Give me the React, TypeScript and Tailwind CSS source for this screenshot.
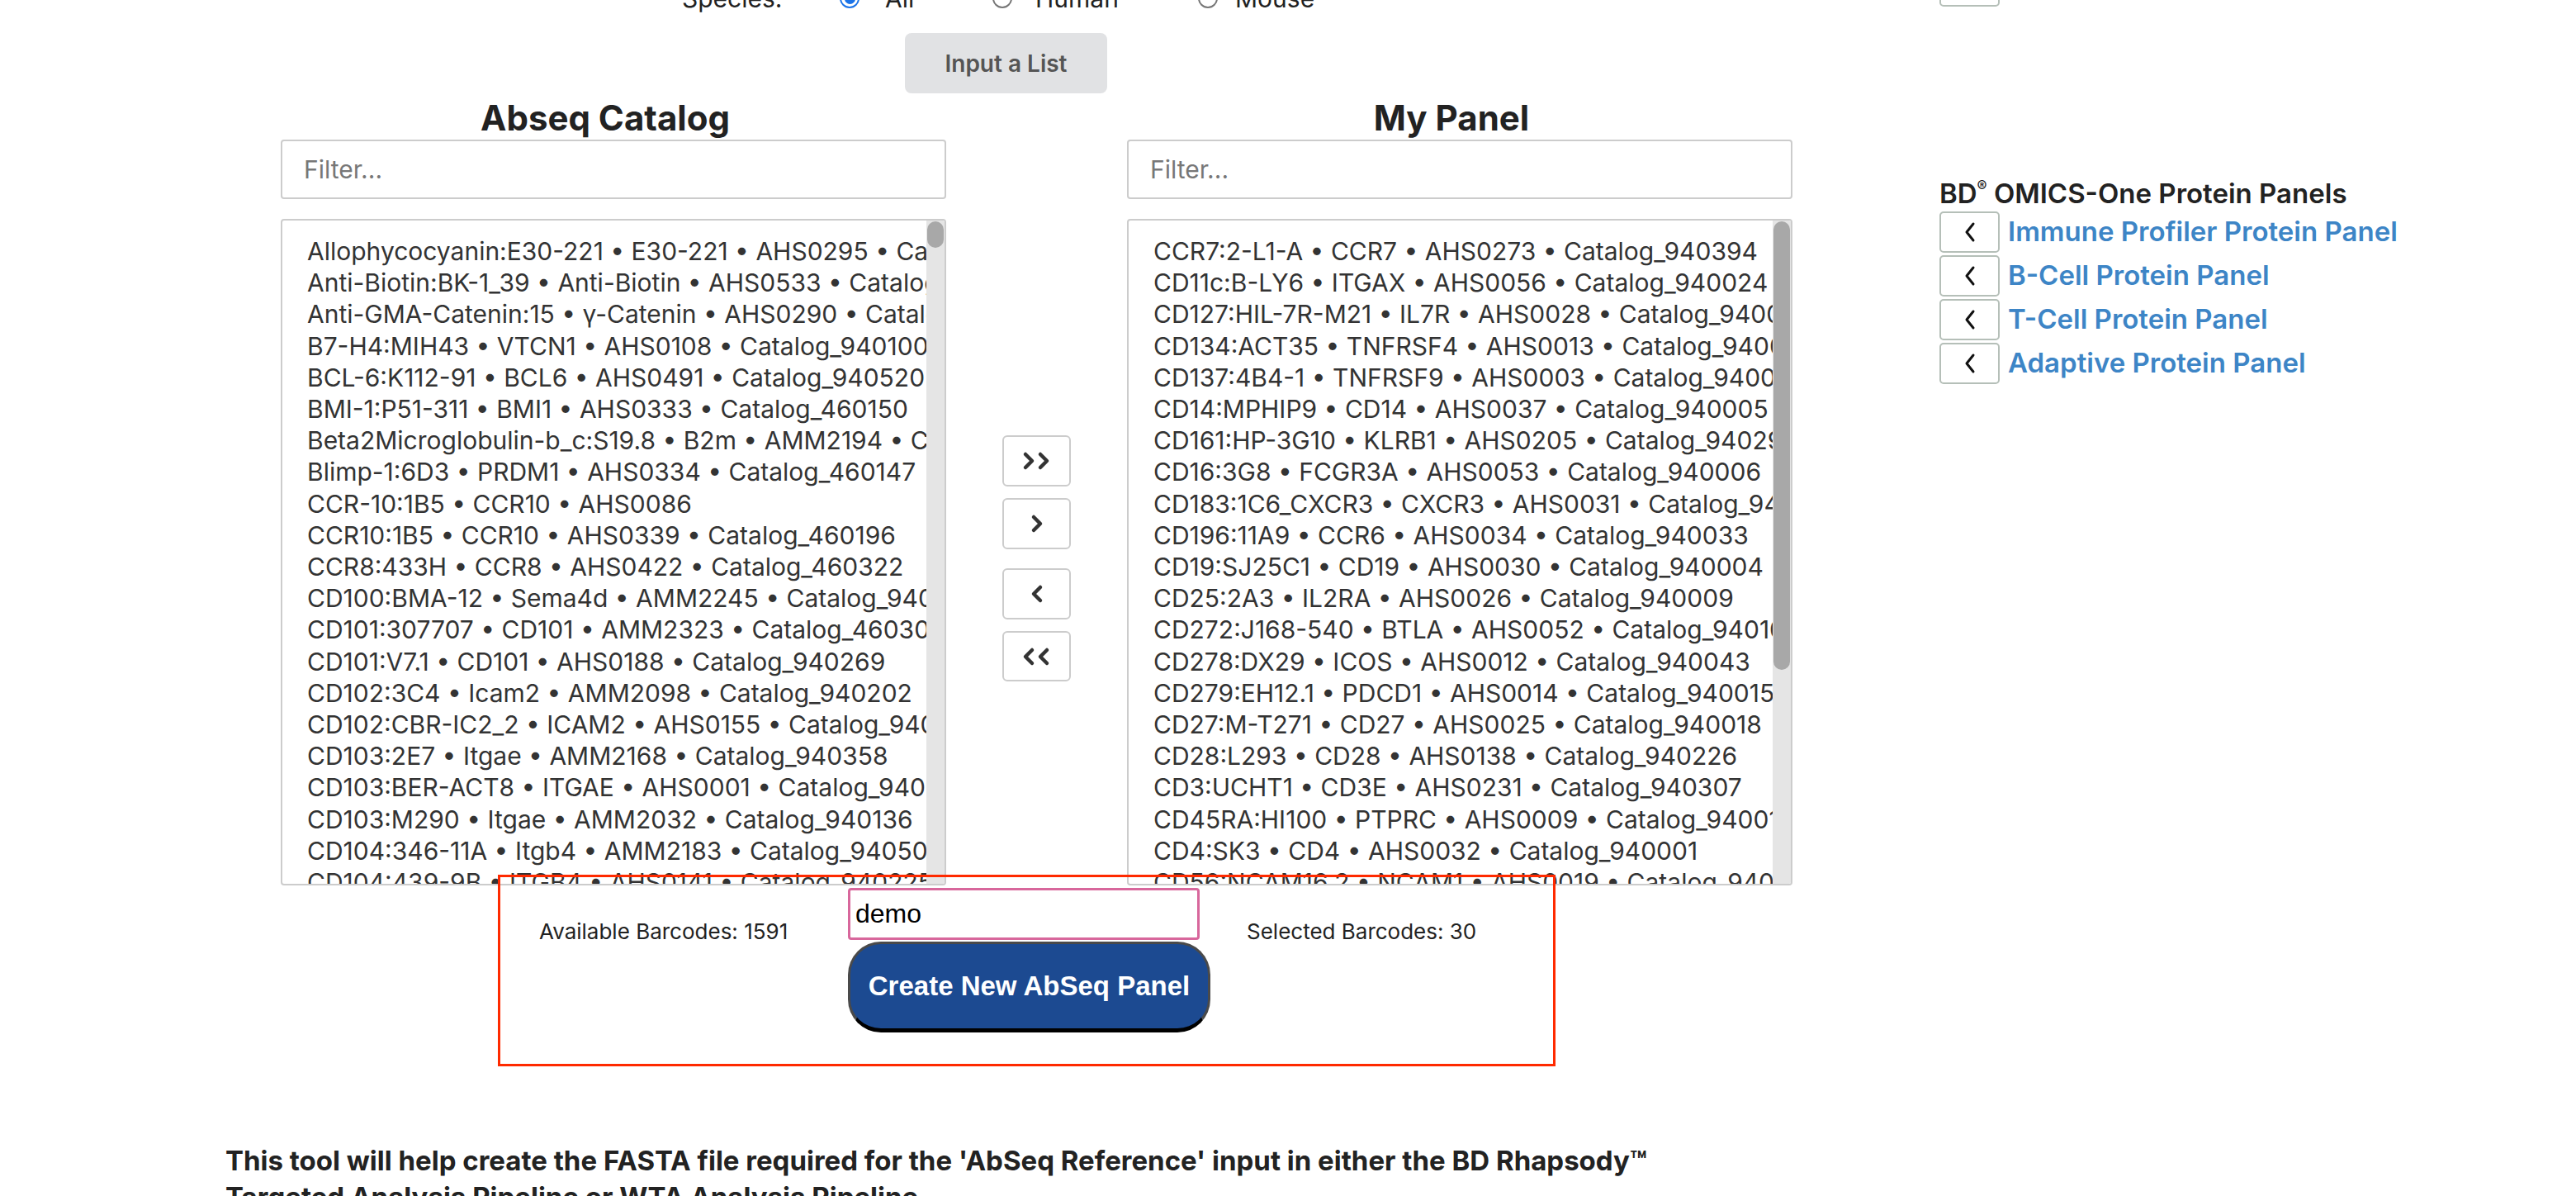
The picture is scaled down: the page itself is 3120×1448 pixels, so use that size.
import React from 'react'

// left catalog rows (clipped by the list box)
const catalog = [
  'Allophycocyanin:E30-221 • E30-221 • AHS0295 • Catalog_940403',
  'Anti-Biotin:BK-1_39 • Anti-Biotin • AHS0533 • Catalog_940497',
  'Anti-GMA-Catenin:15 • γ-Catenin • AHS0290 • Catalog_940374',
  'B7-H4:MIH43 • VTCN1 • AHS0108 • Catalog_940100',
  'BCL-6:K112-91 • BCL6 • AHS0491 • Catalog_940520',
  'BMI-1:P51-311 • BMI1 • AHS0333 • Catalog_460150',
  'Beta2Microglobulin-b_c:S19.8 • B2m • AMM2194 • Catalog_940351',
  'Blimp-1:6D3 • PRDM1 • AHS0334 • Catalog_460147',
  'CCR-10:1B5 • CCR10 • AHS0086',
  'CCR10:1B5 • CCR10 • AHS0339 • Catalog_460196',
  'CCR8:433H • CCR8 • AHS0422 • Catalog_460322',
  'CD100:BMA-12 • Sema4d • AMM2245 • Catalog_940411',
  'CD101:307707 • CD101 • AMM2323 • Catalog_460303',
  'CD101:V7.1 • CD101 • AHS0188 • Catalog_940269',
  'CD102:3C4 • Icam2 • AMM2098 • Catalog_940202',
  'CD102:CBR-IC2_2 • ICAM2 • AHS0155 • Catalog_940209',
  'CD103:2E7 • Itgae • AMM2168 • Catalog_940358',
  'CD103:BER-ACT8 • ITGAE • AHS0001 • Catalog_940015',
  'CD103:M290 • Itgae • AMM2032 • Catalog_940136',
  'CD104:346-11A • Itgb4 • AMM2183 • Catalog_940505',
  'CD104:439-9B • ITGB4 • AHS0141 • Catalog_940225',
]

const myPanel = [
  'CCR7:2-L1-A • CCR7 • AHS0273 • Catalog_940394',
  'CD11c:B-LY6 • ITGAX • AHS0056 • Catalog_940024',
  'CD127:HIL-7R-M21 • IL7R • AHS0028 • Catalog_940012',
  'CD134:ACT35 • TNFRSF4 • AHS0013 • Catalog_940060',
  'CD137:4B4-1 • TNFRSF9 • AHS0003 • Catalog_940055',
  'CD14:MPHIP9 • CD14 • AHS0037 • Catalog_940005',
  'CD161:HP-3G10 • KLRB1 • AHS0205 • Catalog_940294',
  'CD16:3G8 • FCGR3A • AHS0053 • Catalog_940006',
  'CD183:1C6_CXCR3 • CXCR3 • AHS0031 • Catalog_940030',
  'CD196:11A9 • CCR6 • AHS0034 • Catalog_940033',
  'CD19:SJ25C1 • CD19 • AHS0030 • Catalog_940004',
  'CD25:2A3 • IL2RA • AHS0026 • Catalog_940009',
  'CD272:J168-540 • BTLA • AHS0052 • Catalog_940107',
  'CD278:DX29 • ICOS • AHS0012 • Catalog_940043',
  'CD279:EH12.1 • PDCD1 • AHS0014 • Catalog_940015',
  'CD27:M-T271 • CD27 • AHS0025 • Catalog_940018',
  'CD28:L293 • CD28 • AHS0138 • Catalog_940226',
  'CD3:UCHT1 • CD3E • AHS0231 • Catalog_940307',
  'CD45RA:HI100 • PTPRC • AHS0009 • Catalog_940011',
  'CD4:SK3 • CD4 • AHS0032 • Catalog_940001',
  'CD56:NCAM16.2 • NCAM1 • AHS0019 • Catalog_940007',
]

const presets = [
  'Immune Profiler Protein Panel',
  'B-Cell Protein Panel',
  'T-Cell Protein Panel',
  'Adaptive Protein Panel',
]

const Radio = ({ checked }: { checked?: boolean }) =>
  checked ? (
    <span className="block w-[24px] h-[24px] rounded-full border-[2px] border-[#1a73e8] flex items-center justify-center">
      <span className="block w-[13px] h-[13px] rounded-full bg-[#1a73e8]" />
    </span>
  ) : (
    <span className="block w-[24px] h-[24px] rounded-full border-[2px] border-[#767676] bg-white" />
  )

// thick chevrons used on the transfer buttons
const Chevrons = ({ dir, double }: { dir: 'left' | 'right'; double?: boolean }) => {
  const one = dir === 'right' ? 'M4 3 L12 11 L4 19' : 'M12 3 L4 11 L12 19'
  return (
    <svg width={double ? 36 : 16} height="24" viewBox={double ? '0 0 36 22' : '0 0 16 22'} fill="none">
      <path d={one} stroke="#333" strokeWidth="4.5" strokeLinecap="round" strokeLinejoin="round" />
      {double && (
        <path
          d={dir === 'right' ? 'M22 3 L30 11 L22 19' : 'M30 3 L22 11 L30 19'}
          stroke="#333"
          strokeWidth="4.5"
          strokeLinecap="round"
          strokeLinejoin="round"
        />
      )}
    </svg>
  )
}

const ListBox = ({ items, thumb }: { items: string[]; thumb: string }) => (
  <div className="h-[807px] border-[2px] border-[#cccccc] rounded-[4px] flex overflow-hidden bg-white">
    <div className="flex-1 min-w-0 overflow-hidden pt-[18px] pl-[30px]">
      {items.map((t) => (
        <div key={t} className="whitespace-nowrap text-[30px] leading-[38.2px] text-[#333]">
          {t}
        </div>
      ))}
    </div>
    <div className="w-[22px] bg-[#e5e5e5] flex flex-col px-[1px] pt-[1px]">
      <div className={`${thumb} rounded-full bg-[#a8a8a8]`} />
    </div>
  </div>
)

const Column = ({ title, items, thumb }: { title: string; items: string[]; thumb: string }) => (
  <div className="w-[806px] flex flex-col">
    <h2 className="h-[48px] pr-[20px] text-center text-[42px] leading-[48px] font-bold text-[#222]">{title}</h2>
    <input
      className="mt-[2px] h-[72px] border-[2px] border-[#cccccc] rounded-[4px] px-[26px] text-[30px] text-[#333] placeholder:text-[#777] outline-none"
      placeholder="Filter..."
    />
    <div className="mt-[24px]">
      <ListBox items={items} thumb={thumb} />
    </div>
  </div>
)

export default function App() {
  return (
    <div className="w-[3120px] h-[1448px] overflow-hidden bg-white font-['Inter',sans-serif] text-[#222]">
      {/* species row, mostly scrolled off the top */}
      <div className="-mt-[42px] h-[50px] flex items-start">
        <div className="mt-[22px] ml-[826px] flex items-center h-[36px] text-[30px] text-[#222]">
          <span className="w-[191px]">Species:</span>
          <Radio checked />
          <span className="ml-[31px] w-[130px]">All</span>
          <Radio />
          <span className="ml-[28px] w-[197px]">Human</span>
          <Radio />
          <span className="ml-[21px]">Mouse</span>
        </div>
        <div className="ml-auto mr-[698px] w-[73px] h-[50px] border-[2px] border-[#b5bfb8] rounded-[5px]" />
      </div>

      <div className="mt-[32px] ml-[1096px] w-[245px] h-[73px] rounded-[8px] bg-[#e1e2e4] flex items-center justify-center text-[28px] font-semibold text-[#555]">
        Input a List
      </div>

      {/* dual list selector */}
      <div className="mt-[6px] flex items-start pl-[340px]">
        <Column title="Abseq Catalog" items={catalog} thumb="h-[32px]" />

        <div className="ml-[68px] mt-[408px] w-[83px] flex flex-col">
          <button className="h-[62px] border-[2px] border-[#cccccc] rounded-[6px] bg-white flex items-center justify-center">
            <Chevrons dir="right" double />
          </button>
          <button className="mt-[14px] h-[62px] border-[2px] border-[#cccccc] rounded-[6px] bg-white flex items-center justify-center">
            <Chevrons dir="right" />
          </button>
          <button className="mt-[23px] h-[62px] border-[2px] border-[#cccccc] rounded-[6px] bg-white flex items-center justify-center">
            <Chevrons dir="left" />
          </button>
          <button className="mt-[14px] h-[61px] border-[2px] border-[#cccccc] rounded-[6px] bg-white flex items-center justify-center">
            <Chevrons dir="left" double />
          </button>
        </div>

        <div className="ml-[68px]">
          <Column title="My Panel" items={myPanel} thumb="h-[543px]" />
        </div>

        {/* preset panels */}
        <div className="ml-[178px] mt-[97px] flex flex-col">
          <div className="h-[36px] leading-[36px] text-[33px] font-semibold text-[#222] whitespace-nowrap">
            BD<sup className="text-[18px] -top-[0.8em]">®</sup> OMICS-One Protein Panels
          </div>
          <div className="mt-[4px] flex flex-col gap-[3px]">
            {presets.map((p) => (
              <div key={p} className="flex items-center">
                <button className="w-[73px] h-[50px] border-[2px] border-[#b5bfb8] rounded-[5px] bg-white flex items-center justify-center">
                  <svg width="16" height="26" viewBox="0 0 16 26" fill="none">
                    <path d="M12 3 L4 13 L12 23" stroke="#111" strokeWidth="3" strokeLinecap="round" strokeLinejoin="round" />
                  </svg>
                </button>
                <span className="ml-[10px] text-[33px] font-semibold text-[#3d85c6] whitespace-nowrap">{p}</span>
              </div>
            ))}
          </div>
        </div>
      </div>

      {/* create panel box */}
      <div className="relative -mt-[13px] ml-[603px] w-[1281px] h-[232px] border-[3px] border-[#ff2a00] flex items-start pt-[13px]">
        <div className="w-[421px] pl-[47px] mt-[38px] text-[26px] leading-[30px] text-[#222] whitespace-nowrap">
          Available Barcodes: 1591
        </div>
        <div className="w-[439px] flex flex-col">
          <input
            className="w-[426px] h-[63px] border-[3px] border-[#d8679c] rounded-[4px] px-[6px] text-[32px] text-black font-['Liberation_Sans',Arial,sans-serif] outline-none"
            defaultValue="demo"
          />
          <button className="mt-[2px] h-[110px] rounded-[40px] bg-[#1c4a91] border-[3px] border-[#4a4a4a] border-b-[5px] border-b-black text-white text-[33px] font-bold font-['Liberation_Sans',Arial,sans-serif]">
            Create New AbSeq Panel
          </button>
        </div>
        <div className="ml-[44px] mt-[38px] text-[26px] leading-[30px] text-[#222] whitespace-nowrap">
          Selected Barcodes: 30
        </div>
      </div>

      <div className="mt-[92px] ml-[273px] text-[33px] leading-[44px] font-bold text-[#222] whitespace-nowrap">
        <p>This tool will help create the FASTA file required for the 'AbSeq Reference' input in either the BD Rhapsody™</p>
        <p>Targeted Analysis Pipeline or WTA Analysis Pipeline.</p>
      </div>
    </div>
  )
}
